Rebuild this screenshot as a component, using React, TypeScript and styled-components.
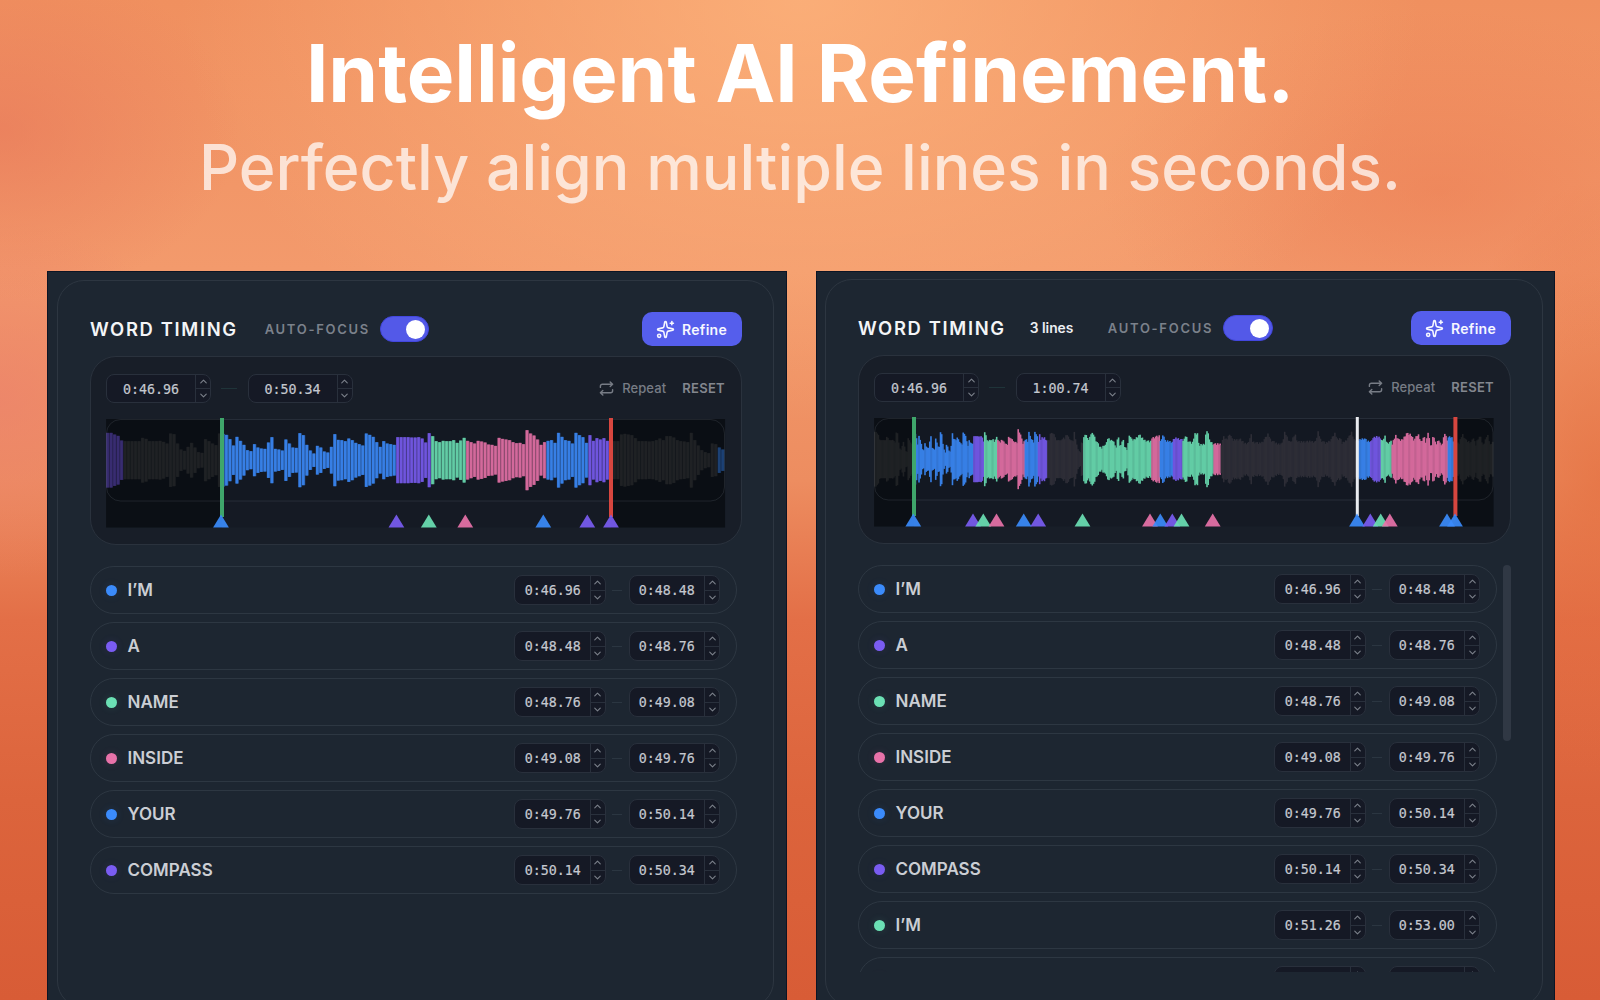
import styled, { createGlobalStyle } from "styled-components";
import { ChevronDown, ChevronUp, Sparkles } from "lucide-react";

const colors = {
  blue: "#3b8bfb",
  purple: "#7a5cf2",
  green: "#6be0b4",
  pink: "#e872a9",
  idle: "#303039",
  muted: "#414447",
};

type Tone = keyof typeof colors;

const GlobalStyle = createGlobalStyle`
  * {
    box-sizing: border-box;
  }

  body {
    margin: 0;
    overflow: hidden;
    font-family: Inter, "Liberation Sans", sans-serif;
  }
`;

const Page = styled.main`
  display: flex;
  flex-direction: column;
  width: 1600px;
  height: 1000px;
  overflow: hidden;
  background:
    radial-gradient(ellipse 620px 420px at 50% 0%, rgba(255, 186, 130, 0.7), transparent 100%),
    radial-gradient(ellipse 240px 170px at 0% 13%, rgba(230, 115, 88, 0.55), transparent 100%),
    radial-gradient(ellipse 340px 180px at 90% 19%, rgba(234, 118, 78, 0.45), transparent 100%),
    radial-gradient(ellipse 200px 180px at 0% 40%, rgba(236, 130, 108, 0.7), transparent 100%),
    radial-gradient(ellipse 160px 300px at 100% 48%, rgba(226, 106, 58, 0.6), transparent 100%),
    linear-gradient(180deg, #f0905f 0%, #f39a6c 27%, #ed8d60 48%, #e36f47 62%, #dc643c 80%, #d85c36 100%);
`;

const Hero = styled.header`
  display: flex;
  flex-direction: column;
  align-items: center;
  height: 271px;
  flex-shrink: 0;
  padding-top: 25px;
  white-space: nowrap;
`;

const Headline = styled.h1`
  margin: 0;
  font-size: 80px;
  line-height: 96px;
  font-weight: 700;
  color: #ffffff;
`;

const Subline = styled.p`
  margin: 6px 0 0;
  font-size: 62.6px;
  line-height: 80px;
  font-weight: 500;
  color: rgba(255, 255, 255, 0.72);
`;

const Windows = styled.div`
  display: flex;
  gap: 29px;
  padding-left: 47px;
`;

const Window = styled.section<{ $lifted?: boolean }>`
  width: ${({ $lifted }) => ($lifted ? 739 : 740)}px;
  height: 760px;
  padding: ${({ $lifted }) => ($lifted ? "7px 11px 0 8px" : "8px 12px 0 9px")};
  background-color: #1d2631;
  border: 1px solid #0c1424;
`;

const Card = styled.div`
  height: 728px;
  padding: 30px 31px 0 32px;
  border: 1px solid #2d3641;
  border-radius: 27px;
`;

const Toolbar = styled.div`
  display: flex;
  align-items: center;
  height: 36px;
`;

const Title = styled.h2`
  margin: 0;
  font-size: 18.4px;
  font-weight: 600;
  letter-spacing: 1.65px;
  color: #f4f5f7;
`;

const LineCount = styled.span`
  margin-left: 24px;
  font-size: 13.8px;
  font-weight: 600;
  color: #eceef1;
`;

const ToggleLabel = styled.span<{ $wide?: boolean }>`
  margin-left: ${({ $wide }) => ($wide ? 34.5 : 27)}px;
  margin-right: 10px;
  font-size: 13px;
  font-weight: 600;
  letter-spacing: 1.7px;
  color: #7b818b;
`;

const Toggle = styled.span`
  display: flex;
  align-items: center;
  justify-content: flex-end;
  width: 49.5px;
  height: 26px;
  padding-right: 3px;
  border: 1px solid #4347df;
  border-radius: 13px;
  background-color: #5359e8;
`;

const Knob = styled.span`
  width: 19px;
  height: 19px;
  border-radius: 50%;
  background-color: #ffffff;
`;

const RefineButton = styled.button`
  display: flex;
  align-items: center;
  gap: 7px;
  width: 100px;
  height: 34px;
  margin-left: auto;
  padding: 0 0 0 14px;
  border: 0;
  border-radius: 10px;
  background-color: #555eec;
  color: #f6f7ff;
  font-family: inherit;
  font-size: 14px;
  font-weight: 600;
  letter-spacing: 0.3px;
`;

const WavePanel = styled.div`
  height: 189px;
  margin-top: 9px;
  padding: 16.5px 15px 0;
  border: 1px solid #2a323d;
  border-radius: 26px;
  background-color: #181e28;
`;

const WaveControls = styled.div`
  display: flex;
  align-items: center;
  height: 29.5px;
  margin-bottom: 14.5px;
`;

const Dash = styled.span<{ $long?: boolean }>`
  width: ${({ $long }) => ($long ? 16 : 10)}px;
  height: 1px;
  margin: 0 ${({ $long }) => ($long ? 10.3 : 6.3)}px;
  background-color: ${({ $long }) => ($long ? "#1f3439" : "#2b3641")};
`;

const TimeInput = styled.span<{ $large?: boolean }>`
  display: flex;
  width: ${({ $large }) => ($large ? 105 : 91.5)}px;
  height: 29.5px;
  flex-shrink: 0;
  border: 1px solid #29303c;
  border-radius: 8px;
  background-color: #151925;
  overflow: hidden;
`;

const TimeText = styled.span`
  flex: 1;
  padding-top: 1px;
  text-align: center;
  font-family: "DejaVu Sans Mono", "Liberation Mono", monospace;
  font-size: 13.3px;
  line-height: 28px;
  color: #c4c8cf;
  -webkit-text-stroke: 0.2px #c4c8cf;
`;

const Steppers = styled.span`
  display: flex;
  flex-direction: column;
  width: 15px;
  border-left: 1px solid #29303c;
`;

const Step = styled.span`
  display: flex;
  flex: 1;
  align-items: center;
  justify-content: center;
  color: #7b808a;

  & + & {
    border-top: 1px solid #29303c;
  }
`;

const RepeatLabel = styled.span`
  display: flex;
  align-items: center;
  gap: 8px;
  margin-left: auto;
  font-size: 13px;
  font-weight: 500;
  letter-spacing: 0.1px;
  color: #777c85;
`;

const Reset = styled.span`
  margin-left: 16px;
  margin-right: 1px;
  font-size: 13px;
  font-weight: 600;
  letter-spacing: 0.3px;
  color: #83878f;
`;

const WaveSvg = styled.svg`
  display: block;
  overflow: visible;
`;

const ListArea = styled.div`
  display: flex;
  gap: 6px;
  height: 407px;
  margin-top: 21px;
  overflow: hidden;
`;

const List = styled.ul<{ $scrolling?: boolean }>`
  display: flex;
  flex-direction: column;
  gap: 8px;
  width: ${({ $scrolling }) => ($scrolling ? 640 : 647)}px;
  margin: 0;
  padding: 0;
  list-style: none;
`;

const Row = styled.li`
  display: flex;
  align-items: center;
  height: 48px;
  flex-shrink: 0;
  padding: 0 16px 0 15px;
  border: 1px solid #2d3742;
  border-radius: 24px;
`;

const Dot = styled.span<{ $tone: Tone }>`
  width: 11px;
  height: 11px;
  margin-right: 10.5px;
  border-radius: 50%;
  background-color: ${({ $tone }) => colors[$tone]};
  box-shadow: 0 0 8px ${({ $tone }) => colors[$tone]}22;
`;

const Word = styled.span`
  margin-right: auto;
  font-size: 17px;
  font-weight: 600;
  color: #cbced4;
`;

const Scrollbar = styled.div`
  width: 8px;
  height: 176px;
  border-radius: 4px;
  background-color: #303844;
`;

interface WordTiming {
  tone: Tone;
  text: string;
  start: string;
  end: string;
}

const words: WordTiming[] = [
  { tone: "blue", text: "I’M", start: "0:46.96", end: "0:48.48" },
  { tone: "purple", text: "A", start: "0:48.48", end: "0:48.76" },
  { tone: "green", text: "NAME", start: "0:48.76", end: "0:49.08" },
  { tone: "pink", text: "INSIDE", start: "0:49.08", end: "0:49.76" },
  { tone: "blue", text: "YOUR", start: "0:49.76", end: "0:50.14" },
  { tone: "purple", text: "COMPASS", start: "0:50.14", end: "0:50.34" },
];

const moreWords: WordTiming[] = [
  ...words,
  { tone: "green", text: "I’M", start: "0:51.26", end: "0:53.00" },
  { tone: "pink", text: "", start: "", end: "" },
];

// peak of each sample, in thirds of a pixel
const samples = [
  82, 82, 77, 73, 59, 57, 57, 57, 57, 57, 67, 64, 57, 57, 57, 58, 55, 50, 80, 78, 50, 32, 28, 40,
  52, 38, 24, 22, 63, 57, 50, 45, 80, 79, 76, 63, 44, 70, 58, 46, 30, 27, 48, 38, 35, 34, 53, 69,
  34, 32, 29, 62, 50, 38, 37, 81, 75, 46, 29, 20, 43, 38, 26, 23, 40, 78, 61, 60, 57, 65, 60, 52,
  48, 44, 80, 76, 70, 54, 40, 57, 50, 48, 46, 69, 69, 69, 69, 68, 68, 69, 65, 53, 81, 72, 57, 54,
  58, 57, 57, 60, 52, 59, 67, 58, 54, 50, 58, 56, 53, 47, 46, 43, 67, 64, 62, 60, 54, 51, 52, 48,
  90, 80, 74, 62, 46, 54, 58, 60, 52, 82, 70, 60, 58, 50, 82, 75, 69, 52, 75, 58, 66, 62, 66, 58,
  56, 57, 57, 77, 79, 77, 75, 66, 57, 57, 57, 56, 57, 60, 65, 60, 72, 72, 68, 60, 57, 56, 54, 82,
  60, 44, 30, 24, 21, 50, 48, 38, 32, 68, 72,
].slice(0, 177);

// [x, peak] knots of the part of the song after the first line
const knots: [number, number][] = [
  [626, 60], [630, 78], [638, 70], [643, 56], [648, 80], [656, 78], [663, 60], [672, 45],
  [680, 34], [688, 46], [694, 45], [699, 66], [708, 58], [715, 62], [721, 40], [726, 40],
  [730, 84], [734, 40], [742, 55], [746, 58], [750, 38], [758, 30], [763, 78], [770, 62],
  [778, 60], [788, 70], [794, 76], [800, 68], [808, 60], [818, 57], [828, 55], [831, 66],
  [843, 70], [855, 72], [858, 50], [865, 82], [870, 58], [883, 56], [894, 54], [898, 66],
  [913, 64], [923, 60], [928, 60], [933, 75], [940, 56], [953, 50], [961, 80], [968, 80],
  [972, 45], [984, 46], [990, 50], [994, 84], [1000, 84], [1004, 58], [1016, 48], [1040, 48],
  [1046, 70], [1056, 60], [1065, 80], [1073, 60], [1098, 62], [1108, 50], [1123, 52],
  [1128, 82], [1133, 55], [1153, 50], [1163, 54], [1180, 78], [1188, 60], [1208, 48],
  [1223, 50], [1230, 84], [1240, 62], [1248, 52], [1261, 78], [1268, 54], [1288, 55],
  [1308, 56], [1323, 55], [1330, 84], [1338, 60], [1353, 50], [1368, 60], [1380, 80],
  [1388, 62], [1396, 66], [1402, 50], [1413, 58], [1423, 70], [1430, 84], [1438, 60],
  [1455, 60], [1468, 66], [1478, 56], [1488, 55], [1490, 62], [1503, 70], [1518, 68],
  [1522, 52], [1530, 74], [1536, 50], [1550, 56], [1552, 48], [1563, 74], [1573, 60],
  [1583, 60], [1595, 80], [1608, 76], [1618, 60], [1630, 78], [1638, 55], [1648, 70],
  [1654, 50], [1660, 84], [1666, 50], [1670, 40], [1676, 78], [1683, 45], [1692, 62],
  [1700, 40], [1710, 80], [1718, 60], [1721, 68], [1730, 70], [1738, 50], [1753, 50],
  [1763, 78], [1773, 60], [1788, 50], [1794, 70], [1803, 45], [1808, 60], [1818, 74],
  [1823, 40], [1833, 62], [1838, 78], [1848, 40], [1860, 78],
];

const peakAt = (x: number) => {
  const next = knots.findIndex(([knotX]) => knotX > x);
  if (next <= 0) return knots[next === 0 ? 0 : knots.length - 1][1];
  const [x0, y0] = knots[next - 1];
  const [x1, y1] = knots[next];
  return y0 + ((y1 - y0) * (x - x0)) / (x1 - x0);
};

const LONG_STEP = 1.195;
const roughness = [0, 4, 1, 6, 2, 0, 5];
const longSamples = Array.from({ length: 518 }, (_, i) =>
  i < 175 ? samples[i] : peakAt(i * LONG_STEP * 3) - roughness[i % 7],
);

type Span = [Tone, number];

interface WaveProps {
  peaks: number[];
  step: number;
  width: number;
  spans: Span[];
  markers: Span[];
  start: number;
  end: number;
  playhead?: number;
}

const Waveform = ({ peaks, step, width, spans, markers, start, end, playhead }: WaveProps) => (
  <WaveSvg width={width} height={110} viewBox={`0 0 ${width} 110`}>
    <rect x={0.5} y={1} width={width} height={108.5} fill="#151a24" />
    <rect x={0.5} y={1.5} width={width - 1} height={81.5} rx={14} fill="#131822" />
    <g opacity={0.9}>
      {peaks.map((peak, i) => {
        const x = i * step;
        const [tone] = spans.find(([, until]) => x + step / 2 < until) ?? spans[spans.length - 1];
        const half = peak / 3;
        const box = { y: 42.2 - half, height: half * 2, fill: colors[tone] };
        if (step < 2) return <rect key={i} x={x} width={step + 0.4} {...box} />;
        return (
          <g key={i}>
            <rect x={x} width={step} opacity={0.62} {...box} />
            <rect x={x + 0.3} width={2.5} {...box} />
          </g>
        );
      })}
    </g>
    <rect y={1} width={start} height={108.5} fill="#020406" opacity={0.5} />
    <rect x={end} y={1} width={width - end} height={108.5} fill="#020406" opacity={0.5} />
    <rect
      x={0.5}
      y={1.5}
      width={width - 1}
      height={81.5}
      rx={14}
      fill="none"
      stroke="#8f9aa8"
      strokeOpacity={0.16}
    />
    <rect x={start - 2} width={4} height={99} fill="#3fa66b" />
    <rect x={end - 2} width={4} height={99} fill="#d7463f" />
    {playhead && <rect x={playhead - 1.5} width={3} height={99} fill="#e9ebef" />}
    {markers.map(([tone, x], i) => (
      <path key={i} d={`M${x} 96.5l7.9 13h-15.8z`} fill={colors[tone]} opacity={0.92} />
    ))}
  </WaveSvg>
);

const RepeatIcon = () => (
  <svg
    width={15}
    height={15}
    viewBox="0 0 15 15"
    fill="none"
    stroke="currentColor"
    strokeWidth={1.4}
    strokeLinecap="round"
    strokeLinejoin="round"
  >
    <path d="M1.4 6.4V5.2a2 2 0 0 1 2-2h10.2M11.2 0.9l2.4 2.3-2.4 2.3" />
    <path d="M13.6 8.6v1.2a2 2 0 0 1-2 2H1.4M3.8 9.5l-2.4 2.3 2.4 2.3" />
  </svg>
);

const TimeField = ({ value, large }: { value: string; large?: boolean }) => (
  <TimeInput $large={large}>
    <TimeText>{value}</TimeText>
    <Steppers>
      <Step>
        <ChevronUp size={11} strokeWidth={2.4} />
      </Step>
      <Step>
        <ChevronDown size={11} strokeWidth={2.4} />
      </Step>
    </Steppers>
  </TimeInput>
);

interface EditorProps {
  words: WordTiming[];
  end: string;
  wave: WaveProps;
  lines?: number;
}

const Editor = ({ words, end, wave, lines }: EditorProps) => (
  <Window $lifted={!!lines}>
    <Card>
      <Toolbar>
        <Title>WORD TIMING</Title>
        {lines && <LineCount>{lines} lines</LineCount>}
        <ToggleLabel $wide={!!lines}>AUTO-FOCUS</ToggleLabel>
        <Toggle>
          <Knob />
        </Toggle>
        <RefineButton>
          <Sparkles size={19} strokeWidth={2} />
          Refine
        </RefineButton>
      </Toolbar>
      <WavePanel>
        <WaveControls>
          <TimeField large value="0:46.96" />
          <Dash $long />
          <TimeField large value={end} />
          <RepeatLabel>
            <RepeatIcon />
            Repeat
          </RepeatLabel>
          <Reset>RESET</Reset>
        </WaveControls>
        <Waveform {...wave} />
      </WavePanel>
      <ListArea>
        <List $scrolling={!!lines}>
          {words.map((word) => (
            <Row key={word.start}>
              <Dot $tone={word.tone} />
              <Word>{word.text}</Word>
              <TimeField value={word.start} />
              <Dash />
              <TimeField value={word.end} />
            </Row>
          ))}
        </List>
        {lines && <Scrollbar />}
      </ListArea>
    </Card>
  </Window>
);

const shortWave: WaveProps = {
  peaks: samples,
  step: 3.495,
  width: 619,
  start: 116,
  end: 505,
  spans: [
    ["purple", 17.5], ["muted", 117], ["blue", 289.9], ["purple", 325], ["green", 360],
    ["pink", 440.5], ["blue", 482.5], ["purple", 505], ["muted", 611], ["blue", 620],
  ],
  markers: [
    ["blue", 115], ["purple", 290.4], ["green", 322.8], ["pink", 359.3], ["blue", 437.3],
    ["purple", 481.3], ["purple", 505],
  ],
};

const longWave: WaveProps = {
  peaks: longSamples,
  step: LONG_STEP,
  width: 619.5,
  start: 40,
  end: 581.4,
  playhead: 483.3,
  spans: [
    ["muted", 40], ["blue", 99.5], ["purple", 110], ["green", 123.5], ["pink", 150],
    ["blue", 164.3], ["purple", 173], ["idle", 209], ["green", 277], ["pink", 286],
    ["blue", 299], ["purple", 308], ["green", 338.8], ["pink", 346.8], ["idle", 483],
    ["blue", 496.5], ["purple", 507], ["green", 517], ["pink", 573.5], ["blue", 581],
    ["muted", 620],
  ],
  markers: [
    ["blue", 39.3], ["purple", 99], ["green", 109.3], ["pink", 122.5], ["blue", 149.7],
    ["purple", 164.2], ["green", 208.5], ["pink", 276], ["blue", 286.3], ["purple", 298.3],
    ["green", 307.5], ["pink", 338.7], ["blue", 483], ["purple", 496.3], ["green", 506.7],
    ["pink", 515.8], ["blue", 573], ["blue", 581],
  ],
};

export default function App() {
  return (
    <Page>
      <GlobalStyle />
      <Hero>
        <Headline>Intelligent AI Refinement.</Headline>
        <Subline>Perfectly align multiple lines in seconds.</Subline>
      </Hero>
      <Windows>
        <Editor words={words} end="0:50.34" wave={shortWave} />
        <Editor words={moreWords} end="1:00.74" wave={longWave} lines={3} />
      </Windows>
    </Page>
  );
}
